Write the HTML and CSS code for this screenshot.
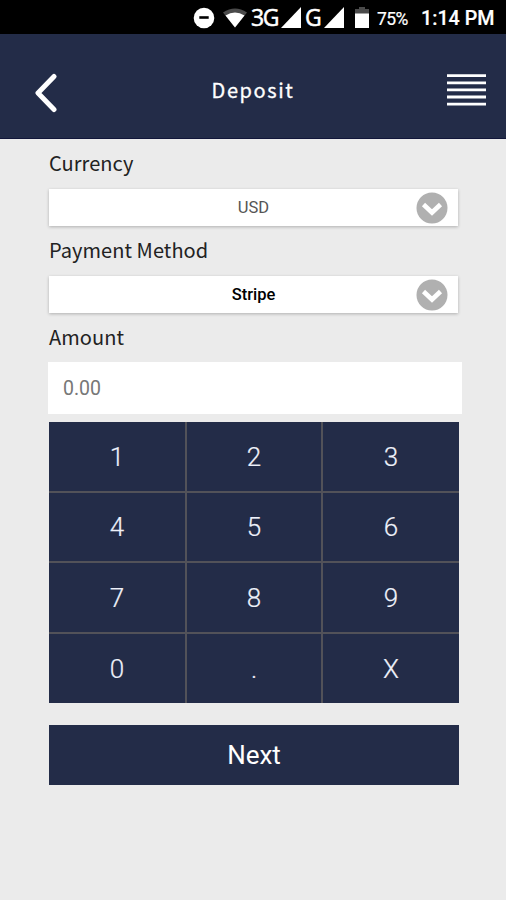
FILE: index.html
```html
<!DOCTYPE html>
<html lang="en">
<head>
<meta charset="utf-8">
<title>Deposit</title>
<link rel="stylesheet" href="styles.css">
</head>
<body>
<div class="status">
  <svg class="dnd" width="22" height="22" viewBox="0 0 22 22"><circle cx="11" cy="11" r="10.3" fill="#fff"/><path d="M6.3 10.500h9.4" stroke="#000" stroke-width="2.6"/></svg>
  <svg class="wifi" width="24" height="20" viewBox="0 0 24 20"><path d="M0 4.500Q12-3.500 24 4.500L12 19.500Z" fill="#4a4a4a"/><path d="M2.500 7.500Q12 1.500 21.500 7.500L12 19.500Z" fill="#fff"/></svg>
  <span class="net net-3g">3G</span>
  <svg class="signal" width="20" height="21" viewBox="0 0 20 21"><path d="M20 0v21H0z" fill="#fff"/></svg>
  <span class="net net-g">G</span>
  <svg class="signal" width="20" height="21" viewBox="0 0 20 21"><path d="M20 0v21H0z" fill="#fff"/></svg>
  <svg class="battery" width="14" height="21" viewBox="0 0 14 21"><path d="M4 0h6v2h4v5H0V2h4z" fill="#4a4a4a"/><path d="M0 6.500h14V21H0z" fill="#fff"/></svg>
  <span class="percent">75%</span>
  <span class="clock">1:14 PM</span>
</div>
<header class="header">
  <svg class="back" width="24" height="40" viewBox="0 0 24 40"><path d="M20 3.500L4 20L20 36.500" fill="none" stroke="#fff" stroke-width="5" stroke-linecap="round" stroke-linejoin="round"/></svg>
  <h1 class="title">Deposit</h1>
  <svg class="menu" width="39" height="33" viewBox="0 0 39 33"><path d="M0 1.700h39M0 8.800h39M0 15.900h39M0 23h39M0 30.200h39" stroke="#fff" stroke-width="2.800"/></svg>
</header>
<main class="form">
  <div class="label currency">Currency</div>
  <div class="select">
    <span class="value usd">USD</span>
    <svg class="arrow" width="32" height="32" viewBox="0 0 32 32"><circle cx="16" cy="16" r="15.500" fill="#b0b0b0"/><path d="M7.500 12.500L16 20.500L24.500 12.500" fill="none" stroke="#fff" stroke-width="4.600"/></svg>
  </div>
  <div class="label method">Payment Method</div>
  <div class="select">
    <span class="value stripe">Stripe</span>
    <svg class="arrow" width="32" height="32" viewBox="0 0 32 32"><circle cx="16" cy="16" r="15.500" fill="#b0b0b0"/><path d="M7.500 12.500L16 20.500L24.500 12.500" fill="none" stroke="#fff" stroke-width="4.600"/></svg>
  </div>
  <div class="label amount">Amount</div>
  <div class="field">0.00</div>
  <div class="keypad">
    <span class="key">1</span><span class="key">2</span><span class="key">3</span>
    <span class="key">4</span><span class="key">5</span><span class="key">6</span>
    <span class="key">7</span><span class="key">8</span><span class="key">9</span>
    <span class="key">0</span><span class="key">.</span><span class="key">X</span>
  </div>
  <div class="next">Next</div>
</main>
</body>
</html>
```
FILE: styles.css
```css
* { box-sizing: border-box; }
body {
  margin: 0;
  width: 506px;
  height: 900px;
  overflow: hidden;
  background: #ebebeb;
  font-family: Roboto, sans-serif;
}
svg { display: block; flex: none; }
.status {
  display: flex;
  align-items: center;
  height: 34px;
  padding-left: 193px;
  background: #000;
  color: #fff;
  line-height: 34px;
  white-space: nowrap;
}
.dnd { margin-top: 1px; }
.wifi { margin: 2px 0 0 8px; }
.net {
  flex: none;
  font-family: "Open Sans", sans-serif;
  font-size: 23px;
  line-height: 32px;
  letter-spacing: -1.500px;
  -webkit-text-stroke: 0.500px #fff;
}
.net-3g { width: 30px; margin-left: 4px; }
.net-g { width: 19px; margin-left: 4px; }
.battery { margin-left: 11px; }
.percent { width: 44px; margin: 3px 0 0 8px; font-size: 17.500px; letter-spacing: -0.600px; -webkit-text-stroke: 0.200px #fff; }
.clock { margin-top: 3px; font-size: 19.700px; font-weight: 500; -webkit-text-stroke: 0.200px #fff; }
.header {
  display: grid;
  grid-template-columns: 59px 1fr 59px;
  align-items: center;
  height: 105px;
  background: #232c48;
  border-bottom: 1px solid #11163a;
  color: #fff;
}
.back { margin: 13px 0 0 34px; }
.title {
  margin: 8px 0 0;
  text-align: center;
  font: 400 20px/30px "Noto Sans CJK SC", sans-serif;
  letter-spacing: 1.600px;
  -webkit-text-stroke: 0.300px #fff;
}
.menu { margin: 9px 0 0; }
.form { padding: 0 47px 0 49px; }
.label {
  height: 50px;
  padding-top: 9px;
  font: 400 20px/30px "Noto Sans CJK SC", sans-serif;
  letter-spacing: 0.050px;
  color: #222;
  white-space: nowrap;
}
.select {
  display: grid;
  grid-template-columns: 42px 1fr 42px;
  align-items: center;
  height: 37px;
  margin-right: 1px;
  background: #fff;
  box-shadow: 0 1px 3px rgba(0, 0, 0, .25);
}
.value { grid-column: 2; text-align: center; font-size: 16.500px; line-height: 37px; }
.usd { color: #555; line-height: 34px; }
.stripe { color: #000; font-weight: 500; }
.field {
  width: 414px;
  height: 52px;
  margin: -1px 0 8px -1px;
  padding-left: 15px;
  background: #fff;
  color: #777;
  font-size: 19.500px;
  line-height: 53px;
}
.keypad {
  display: grid;
  grid-template-columns: 136px 134px 1fr;
  grid-template-rows: 69px 68px 69px 1fr;
  gap: 2px;
  height: 281px;
  background: #525259;
}
.key {
  display: flex;
  align-items: center;
  justify-content: center;
  background: #232c48;
  color: #eef1fa;
  font-size: 26px;
  font-weight: 300;
  -webkit-text-stroke: 0.200px #eef1fa;
}
.next {
  height: 60px;
  margin-top: 22px;
  background: #232c48;
  color: #fff;
  text-align: center;
  font-size: 26px;
  line-height: 60px;
}
```
